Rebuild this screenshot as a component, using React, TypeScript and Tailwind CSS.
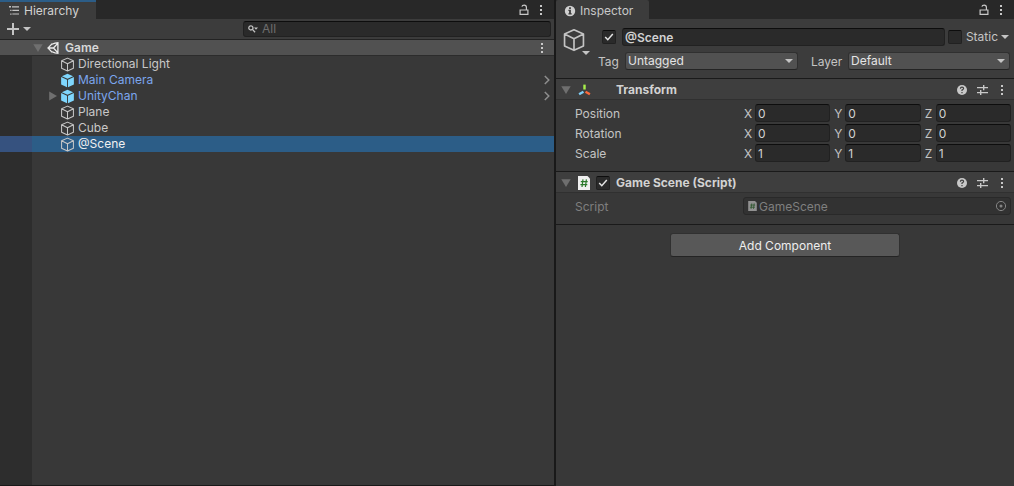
import React, { useState } from 'react';

type Axis = 'X' | 'Y' | 'Z';

interface SceneObject {
  name: string;
  prefab?: boolean;
  expandable?: boolean;
}

const OBJECTS: SceneObject[] = [
  { name: 'Directional Light' },
  { name: 'Main Camera', prefab: true },
  { name: 'UnityChan', prefab: true, expandable: true },
  { name: 'Plane' },
  { name: 'Cube' },
  { name: '@Scene' },
];

const TRANSFORM: { label: string; value: string }[] = [
  { label: 'Position', value: '0' },
  { label: 'Rotation', value: '0' },
  { label: 'Scale', value: '1' },
];

const AXES: Axis[] = ['X', 'Y', 'Z'];

const FIELD = 'rounded-[3px] border border-[#212121] border-t-[#0d0d0d] bg-[#2a2a2a] text-[#d2d2d2] outline-none';

/* ---------- Icons ---------- */

const CubeIcon = ({ className }: { className: string }) => (
  <svg viewBox="0 0 16 16" className={className} fill="none" stroke="currentColor" strokeWidth="1.1" strokeLinejoin="round">
    <path d="M8 1.2 14.3 4v8L8 14.9 1.7 12V4zM1.7 4 8 7.2 14.3 4M8 7.2v7.7" />
  </svg>
);

const PrefabIcon = ({ className }: { className: string }) => (
  <svg viewBox="0 0 16 16" className={className} fill="#7fd6fd">
    <path d="M8 .8 14 3.4 8 6.2 2 3.4z" />
    <path d="M1.2 4.3 7.5 7.2v8L1.2 12.3z" />
    <path d="M14.8 4.3 8.5 7.2v8l6.3-2.9z" />
  </svg>
);

const ArrowDown = ({ className }: { className: string }) => (
  <svg viewBox="0 0 8 4" className={className} fill="currentColor"><path d="M0 0h8L4 4z" /></svg>
);

const Foldout = ({ open = true }: { open?: boolean }) => (
  <svg viewBox="0 0 10 10" className="h-[10px] w-[10px] shrink-0" fill="#6f6f6f">
    <path d={open ? 'M.3 1.2h9.4L5 9z' : 'M1.2.6v8.8L9 5z'} />
  </svg>
);

const Dots = () => (
  <svg viewBox="0 0 4 12" className="h-3 w-1" fill="#c8c8c8">
    <path d="M1 1h2v2H1zM1 5h2v2H1zM1 9h2v2H1z" />
  </svg>
);

const LockIcon = () => (
  <svg viewBox="0 0 10 12" className="h-3 w-[10px]" fill="none" stroke="#c8c8c8" strokeWidth="1.2">
    <path d="M1.1 6h7.8v4.4H1.1zM7.4 6V3.2Q7.4 1.1 5.2 1.1 3.2 1.1 2.9 2.7" />
  </svg>
);

const ListIcon = () => (
  <svg viewBox="0 0 12 10" className="h-[10px] w-3" fill="#c4c4c4">
    <path d="M1 0h2v1.4H1zM4 .2h7v1.2H4zM2.2 3.8h1.3v1.3H2.2zM4.3 3.8H11V5H4.3zM2.2 7.4h1.3v1.3H2.2zM4.3 7.4H11v1.2H4.3z" />
  </svg>
);

const InfoIcon = () => (
  <svg viewBox="0 0 12 12" className="h-3 w-3">
    <circle cx="6" cy="6" r="5.2" fill="#d0d0d0" />
    <path d="M5.1 2.2h1.8v1.7H5.1zM4.4 4.8h2.5v3.5h.8v1.1H4.4V8.3h.7V5.9h-.7z" fill="#3c3c3c" />
  </svg>
);

const UnityIcon = () => (
  <svg viewBox="0 0 12 12" className="h-3 w-3 shrink-0" fill="none" stroke="#ececec" strokeWidth="1.3">
    <path d="M5.2 1.6 1 6l4.2 4.4M8 1.1l2.9-.3v3.3M8 10.9l2.9.3V7.9M1.2 6h5.3M6.5 6l4-4.4M6.5 6l4 4.4M4.3 2.5 8 1.1M4.3 9.5 8 10.9M10.9 3.5v5" />
  </svg>
);

const SearchIcon = () => (
  <svg viewBox="0 0 10 8" className="h-2 w-[10px] shrink-0" fill="none" stroke="#c4c4c4" strokeWidth="1.3">
    <circle cx="2.9" cy="2.9" r="2.1" />
    <path d="m4.4 4.4 2.7 2.9" />
    <path d="M6 2.6h4L8 4.7z" fill="#c4c4c4" stroke="none" />
  </svg>
);

const TransformIcon = () => (
  <svg viewBox="0 0 14 12" className="h-3 w-[13px]" fill="none" strokeWidth="2.6">
    <path d="M7 .2v5.3" stroke="#a7f04b" />
    <path d="M5.9 7.9 1.2 10.6" stroke="#7fd0fa" />
    <path d="m8.1 7.9 4.7 2.7" stroke="#fa6a3c" />
  </svg>
);

const ScriptIcon = ({ className }: { className: string }) => (
  <svg viewBox="0 0 12 14" className={className}>
    <path d="M0 0h9.5L12 2.5V14H0z" fill="#f0f0f0" />
    <path d="M5 3.4 4 11M8.4 3.4l-1 7.6M2.8 5.7h6.9M2.4 8.7h6.9" stroke="#2b7a2b" strokeWidth="1.2" fill="none" />
  </svg>
);

const HelpIcon = () => (
  <svg viewBox="0 0 10 10" className="h-[10px] w-[10px]">
    <circle cx="5" cy="5" r="5" fill="#c8c8c8" />
    <path d="M3.4 3.8Q3.4 2.2 5 2.2t1.6 1.4Q6.6 4.4 5 5.1v1M5 6.9v1.3" stroke="#3e3e3e" strokeWidth="1.2" fill="none" />
  </svg>
);

const PresetIcon = () => (
  <svg viewBox="0 0 11 10" className="h-[10px] w-[11px]" fill="#c8c8c8">
    <path d="M0 2h6V0h1.4v2H11v1.2H7.4v2H6v-2H0zM0 7h3V5h1.4v2H11v1.2H4.4v2H3v-2H0z" />
  </svg>
);

/* ---------- Shared controls ---------- */

const Checkbox = ({ label, on = false }: { label: string; on?: boolean }) => {
  const [checked, setChecked] = useState(on);
  return (
    <span className="grid h-[14px] w-[14px] shrink-0">
      <input
        type="checkbox"
        id={label}
        aria-label={label}
        checked={checked}
        onChange={e => setChecked(e.target.checked)}
        className="col-start-1 row-start-1 h-[14px] w-[14px] appearance-none rounded-[2px] border border-[#212121] border-t-[#0d0d0d] bg-[#2a2a2a]"
      />
      {checked && (
        <svg viewBox="0 0 14 14" className="pointer-events-none col-start-1 row-start-1" fill="none" stroke="#e4e4e4" strokeWidth="1.5">
          <path d="m3.2 7 2.6 2.7 5-5.6" />
        </svg>
      )}
    </span>
  );
};

const Dropdown = ({ id, options }: { id: string; options: string[] }) => (
  <span className="grid w-full items-center">
    <select
      id={id}
      className="col-start-1 row-start-1 h-[18px] w-full appearance-none rounded-[3px] border border-[#303030] border-b-[#242424] bg-[#515151] pl-[2px] text-[#e4e4e4] outline-none"
    >
      {options.map(o => <option key={o}>{o}</option>)}
    </select>
    <ArrowDown className="pointer-events-none col-start-1 row-start-1 mr-[5px] h-1 w-2 justify-self-end text-[#c4c4c4]" />
  </span>
);

const PanelButtons = () => (
  <div className="flex items-center gap-[10px]">
    <button aria-label="Lock"><LockIcon /></button>
    <button aria-label="Panel menu"><Dots /></button>
  </div>
);

const ComponentHeader = ({ title, children }: { title: string; children: React.ReactNode }) => (
  <header className="flex h-[21px] items-center border-b border-[#303030] bg-[#3e3e3e] pl-[5px] pr-[10px] pt-px">
    <button aria-label={`Fold ${title}`}><Foldout /></button>
    <div className="flex w-[45px] items-center gap-[6px] pl-[7px]">{children}</div>
    <h2 className="flex-1 pt-px font-bold text-[#d2d2d2]">{title}</h2>
    <div className="flex items-center gap-[10px]">
      <button aria-label="Help"><HelpIcon /></button>
      <button aria-label="Presets"><PresetIcon /></button>
      <button aria-label="Component menu" className="pl-[2px]"><Dots /></button>
    </div>
  </header>
);

/* ---------- Panels ---------- */

const Hierarchy = () => {
  const [selected, setSelected] = useState('@Scene');

  return (
    <section className="flex min-w-0 flex-[554] flex-col border-b border-[#191919]">
      <div className="flex h-[19px] justify-between bg-[#282828] pr-[11px]">
        <h1 className="flex w-24 items-center gap-1 border-t-2 border-[#2c5d87] bg-[#3c3c3c] pl-2 text-[#d2d2d2]">
          <ListIcon />
          Hierarchy
        </h1>
        <PanelButtons />
      </div>

      <div className="flex h-[21px] items-center justify-between border-b border-[#232323] bg-[#3c3c3c] pl-[7px] pr-[3px]">
        <button aria-label="Create" className="flex items-center gap-1 text-[#c4c4c4]">
          <svg viewBox="0 0 12 12" className="h-3 w-3" fill="currentColor"><path d="M5 0h2v5h5v2H7v5H5V7H0V5h5z" /></svg>
          <ArrowDown className="h-1 w-2" />
        </button>
        <label className={`flex h-4 w-[308px] items-center gap-1 pl-1 ${FIELD}`}>
          <SearchIcon />
          <input aria-label="Search" placeholder="All" className="min-w-0 flex-1 bg-transparent outline-none placeholder:text-[#6e6e6e]" />
        </label>
      </div>

      <div className="flex h-4 items-center gap-1 border-b border-[#2c2c2c] bg-[#515151] pl-[33px] pr-[10px] text-[#d8d8d8]">
        <Foldout />
        <UnityIcon />
        <span className="flex-1 pl-[2px] font-semibold">Game</span>
        <button aria-label="Scene menu"><Dots /></button>
      </div>

      <div className="flex flex-1 flex-col">
        <ul>
          {OBJECTS.map(obj => {
            const active = obj.name === selected;
            return (
              <li key={obj.name} className="flex h-4">
                <span className={`w-8 shrink-0 ${active ? 'bg-[#36527f]' : 'bg-[#2d2d2d]'}`} />
                <button
                  onClick={() => setSelected(obj.name)}
                  className={`flex flex-1 items-center pl-4 pr-1 text-left ${active ? 'bg-[#2c5d87] text-[#f0f0f0]' : obj.prefab ? 'text-[#7ba6ee]' : 'text-[#c8c8c8]'}`}
                >
                  <span className="flex w-3 shrink-0">{obj.expandable && <Foldout open={false} />}</span>
                  {obj.prefab ? <PrefabIcon className="h-[15px] w-[15px]" /> : <CubeIcon className="h-[15px] w-[15px] text-[#c8c8c8]" />}
                  <span className="flex-1 pl-[3px]">{obj.name}</span>
                  {obj.prefab && (
                    <svg viewBox="0 0 6 10" className="h-[10px] w-[6px]" fill="none" stroke="#8e8e8e" strokeWidth="1.5"><path d="m.8 1 4 4-4 4" /></svg>
                  )}
                </button>
              </li>
            );
          })}
        </ul>
        <div className="w-8 flex-1 bg-[#2d2d2d]" />
      </div>
    </section>
  );
};

const Inspector = () => (
  <section className="min-w-0 flex-[458] text-[#c4c4c4]">
    <div className="flex h-[19px] justify-between bg-[#282828] pr-[11px]">
      <h1 className="flex w-[93px] items-center gap-1 rounded-t-[2px] bg-[#3c3c3c] pl-2 pt-[2px] text-[#c8c8c8]">
        <InfoIcon />
        Inspector
      </h1>
      <PanelButtons />
    </div>

    <div className="flex gap-2 border-b border-[#1a1a1a] bg-[#3c3c3c] pb-2 pl-[6px] pr-1 pt-[9px]">
      <button aria-label="Object icon" className="flex w-7 flex-col text-[#c4c4c4]">
        <CubeIcon className="h-6 w-6" />
        <ArrowDown className="-mt-px h-1 w-2 self-end" />
      </button>
      <div className="flex min-w-0 flex-1 flex-col gap-[6px]">
        <div className="flex items-center pl-1 pr-px">
          <Checkbox label="Active" on />
          <input aria-label="Name" defaultValue="@Scene" className={`ml-[6px] mr-[3px] h-[18px] min-w-0 flex-1 px-[2px] font-semibold ${FIELD}`} />
          <Checkbox label="Static" />
          <label htmlFor="Static" className="pl-1">Static</label>
          <button aria-label="Static flags" className="pl-[3px]"><ArrowDown className="h-1 w-2" /></button>
        </div>
        <div className="flex items-center">
          <label htmlFor="tag" className="w-[27px] pt-px">Tag</label>
          <div className="flex flex-[173]"><Dropdown id="tag" options={['Untagged', 'Player']} /></div>
          <label htmlFor="layer" className="ml-[13px] w-[37px] pt-px">Layer</label>
          <div className="flex flex-[162]"><Dropdown id="layer" options={['Default', 'UI']} /></div>
        </div>
      </div>
    </div>

    <article className="border-b border-[#1a1a1a] pb-[9px]">
      <ComponentHeader title="Transform"><TransformIcon /></ComponentHeader>
      <div className="flex flex-col gap-[2px] pl-[19px] pr-[3px] pt-1">
        {TRANSFORM.map(row => (
          <div key={row.label} className="flex items-center">
            <span className="w-[169px] pt-[2px]">{row.label}</span>
            <div className="grid flex-1 grid-cols-3 gap-1">
              {AXES.map(axis => (
                <label key={axis} className="flex items-center">
                  <span className="w-[11px] pt-[2px]">{axis}</span>
                  <input aria-label={`${row.label} ${axis}`} defaultValue={row.value} className={`h-[18px] min-w-0 flex-1 px-[2px] pt-px ${FIELD}`} />
                </label>
              ))}
            </div>
          </div>
        ))}
      </div>
    </article>

    <article className="border-b border-[#1a1a1a] pb-[9px]">
      <ComponentHeader title="Game Scene (Script)">
        <ScriptIcon className="h-[14px] w-3" />
        <Checkbox label="Game Scene enabled" on />
      </ComponentHeader>
      <div className="flex items-center pl-[19px] pr-[3px] pt-1 text-[#7f7f7f]">
        <label htmlFor="script" className="w-[168px] pt-[2px]">Script</label>
        <div className="flex h-[18px] flex-1 items-center rounded-[3px] border border-[#292929] bg-[#323232] pl-1 pr-[3px]">
          <ScriptIcon className="h-[10px] w-[9px] opacity-50" />
          <input id="script" disabled value="GameScene" className="min-w-0 flex-1 pl-[2px] pt-px" />
          <svg viewBox="0 0 12 12" className="h-3 w-3" fill="none" stroke="#858585">
            <circle cx="6" cy="6" r="4.6" />
            <circle cx="6" cy="6" r="1.5" fill="#858585" stroke="none" />
          </svg>
        </div>
      </div>
    </article>

    <div className="flex justify-center pt-2">
      <button className="h-6 w-[230px] rounded-[3px] border border-[#303030] border-b-[#242424] bg-[#585858] pt-px text-[#eeeeee]">Add Component</button>
    </div>
  </section>
);

export default function App() {
  return (
    <main className="flex min-h-screen bg-[#383838] font-['Inter',sans-serif] text-[12px] leading-4">
      <Hierarchy />
      <div className="w-[2px] bg-[#191919]" />
      <Inspector />
    </main>
  );
}
